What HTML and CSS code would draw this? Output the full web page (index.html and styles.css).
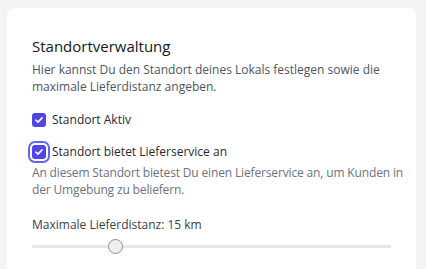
FILE: index.html
```html
<!DOCTYPE html>
<html lang="de">
<head>
    <meta charset="UTF-8">
    <meta name="viewport" content="width=device-width, initial-scale=1.0">
    <title>Standortverwaltung</title>
    <link rel="stylesheet" href="styles.css">
</head>
<body>
    <div class="card">
        <h2 class="title">Standortverwaltung</h2>
        <p class="desc">Hier kannst Du den Standort deines Lokals festlegen sowie die maximale Lieferdistanz angeben.</p>

        <label class="check">
            <input type="checkbox" checked>
            <span>Standort Aktiv</span>
        </label>

        <label class="check check-focus">
            <input type="checkbox" checked>
            <span>Standort bietet Lieferservice an</span>
        </label>
        <p class="hint">An diesem Standort bietest Du einen Lieferservice an, um Kunden in der Umgebung zu beliefern.</p>

        <div class="range-box">
            <div class="range-label">Maximale Lieferdistanz: 15 km</div>
            <input class="range" type="range" min="5" max="50" value="15">
        </div>
    </div>
</body>
</html>
```

FILE: styles.css
```css
body {
    margin: 0;
    background: #f3f4f6;
    font-family: "Open Sans", "Noto Sans", sans-serif;
    color: #111827;
}

.card {
    margin: 8px 10px 0 7px;
    background: #fff;
    border-radius: 8px;
    padding: 28px 10px 40px 25px;
    min-height: 300px;
}

.title {
    margin: 0;
    font-size: 15px;
    font-weight: 400;
    line-height: 20px;
}

.desc {
    margin: 5px 0 0 0;
    max-width: 360px;
    font-size: 12px;
    line-height: 17px;
    color: #4b5563;
}

.check {
    display: flex;
    align-items: center;
    gap: 6px;
    font-size: 12px;
    color: #1f2937;
}

.check:first-of-type {
    margin-top: 16px;
}

.check + .check {
    margin-top: 15px;
}

.check input {
    appearance: none;
    margin: 0;
    width: 14px;
    height: 14px;
    border-radius: 3px;
    background: #4f46e5 url("data:image/svg+xml,%3Csvg xmlns='http://www.w3.org/2000/svg' viewBox='0 0 16 16'%3E%3Cpath d='M4.5 8.2l2.3 2.2 4.7-4.8' fill='none' stroke='white' stroke-width='1.8' stroke-linecap='round' stroke-linejoin='round'/%3E%3C/svg%3E") center / 100% no-repeat;
}

.check-focus input {
    box-shadow: 0 0 0 2px #fff, 0 0 0 4px #6366f1;
}

.hint {
    margin: 4px 0 0 0;
    font-size: 12px;
    line-height: 17px;
    letter-spacing: -0.15px;
    color: #6b7280;
}

.range-box {
    margin-top: 18px;
}

.range-label {
    font-size: 12px;
    color: #374151;
}

.range {
    appearance: none;
    display: block;
    width: 359px;
    height: 3px;
    margin: 12px 0 0 0;
    background: #e5e7eb;
    border-radius: 2px;
}

.range::-webkit-slider-thumb {
    appearance: none;
    width: 15px;
    height: 15px;
    border-radius: 50%;
    background: #efefef;
    border: 1px solid #8f8f8f;
}
```
